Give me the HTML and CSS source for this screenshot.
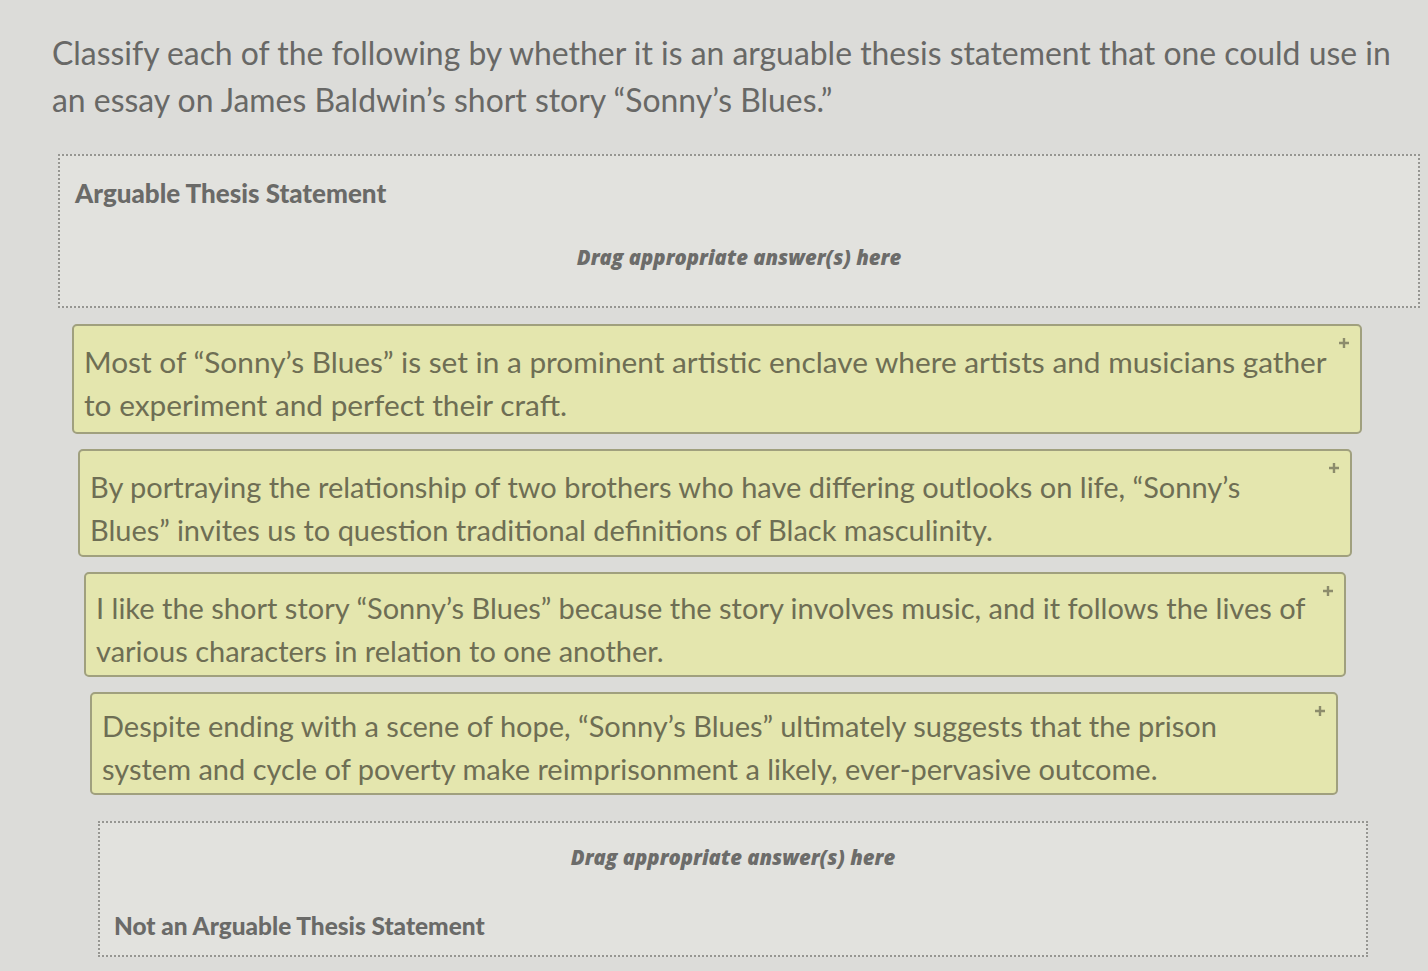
FILE: index.html
```html
<!DOCTYPE html>
<html lang="en">
	<head>
		<meta charset="UTF-8" />
		<meta name="viewport" content="width=device-width, initial-scale=1.0" />
		<title>Classify Thesis Statements</title>
		<link rel="stylesheet" href="styles.css">
	</head>
	<body>
		<div class="question">
			<p class="prompt">Classify each of the following by whether it is an arguable thesis statement that one could use in an essay on James Baldwin’s short story “Sonny’s Blues.”</p>
			<div class="dropzone zone-top">
				<h2 class="zone-title">Arguable Thesis Statement</h2>
				<p class="zone-hint">Drag appropriate answer(s) here</p>
			</div>
			<div class="answers">
				<div class="answer a1">
					<p>Most of “Sonny’s Blues” is set in a prominent artistic enclave where artists and musicians gather to experiment and perfect their craft.</p>
					<svg class="move" viewBox="0 0 12 12"><path d="M6 1v10M1 6h10" /></svg>
				</div>
				<div class="answer a2">
					<p>By portraying the relationship of two brothers who have differing outlooks on life, “Sonny’s Blues” invites us to question traditional definitions of Black masculinity.</p>
					<svg class="move" viewBox="0 0 12 12"><path d="M6 1v10M1 6h10" /></svg>
				</div>
				<div class="answer a3">
					<p>I like the short story “Sonny’s Blues” because the story involves music, and it follows the lives of various characters in relation to one another.</p>
					<svg class="move" viewBox="0 0 12 12"><path d="M6 1v10M1 6h10" /></svg>
				</div>
				<div class="answer a4">
					<p>Despite ending with a scene of hope, “Sonny’s Blues” ultimately suggests that the prison system and cycle of poverty make reimprisonment a likely, ever-pervasive outcome.</p>
					<svg class="move" viewBox="0 0 12 12"><path d="M6 1v10M1 6h10" /></svg>
				</div>
			</div>
			<div class="dropzone zone-bottom">
				<p class="zone-hint">Drag appropriate answer(s) here</p>
				<h2 class="zone-title">Not an Arguable Thesis Statement</h2>
			</div>
		</div>
	</body>
</html>
```

FILE: styles.css
```css
* {
	margin: 0;
	padding: 0;
	box-sizing: border-box;
}
body {
	background-color: rgb(220, 220, 217);
	font-family: Lato, "Liberation Sans", sans-serif;
	color: rgb(104, 104, 102);
	overflow: hidden;
}
.question {
	display: flex;
	flex-direction: column;
	padding-top: 30px;
}
.prompt {
	padding: 0 20px 0 52px;
	font-size: 31.9px;
	line-height: 47px;
}
.dropzone {
	border: 2px dotted rgb(150, 150, 146);
	background-color: rgb(226, 226, 222);
	display: flex;
	flex-direction: column;
}
.zone-top {
	margin: 30px 8px 0 58px;
	height: 154px;
	padding: 21px 15px 0 15px;
}
.zone-bottom {
	margin: 26px 60px 0 98px;
	height: 136px;
	padding: 20px 14px 0 14px;
}
.zone-title {
	font-size: 24.4px;
	font-weight: 900;
	color: rgb(106, 106, 104);
}
.zone-top .zone-title {
	font-size: 26px;
}
.zone-hint {
	align-self: center;
	font-family: "Open Sans", sans-serif;
	font-style: italic;
	font-weight: 800;
	font-size: 20.3px;
	color: rgb(108, 108, 106);
}
.zone-top .zone-hint {
	margin-top: 34px;
}
.zone-bottom .zone-title {
	margin-top: 40px;
}
.answers {
	display: flex;
	flex-direction: column;
	gap: 15px;
	margin-top: 16px;
}
.answer {
	position: relative;
	background-color: rgb(228, 230, 174);
	border: 2px solid rgb(160, 160, 126);
	border-radius: 5px;
	padding: 14px 18px 0 10px;
	color: rgb(110, 110, 84);
	font-size: 29px;
	line-height: 43px;
}
.a1 { margin: 0 66px 0 72px; height: 110px; font-size: 29.8px; }
.a2 { margin: 0 76px 0 78px; height: 108px; padding-top: 14px; padding-right: 60px; }
.a3 { margin: 0 82px 0 84px; height: 105px; padding-top: 12px; }
.a4 { margin: 0 90px 0 90px; height: 103px; padding-top: 10px; padding-right: 90px; }
.move {
	position: absolute;
	top: 11px;
	right: 10px;
	width: 12px;
	height: 12px;
	fill: none;
	stroke: rgb(140, 140, 108);
	stroke-width: 2.4;
}
```
